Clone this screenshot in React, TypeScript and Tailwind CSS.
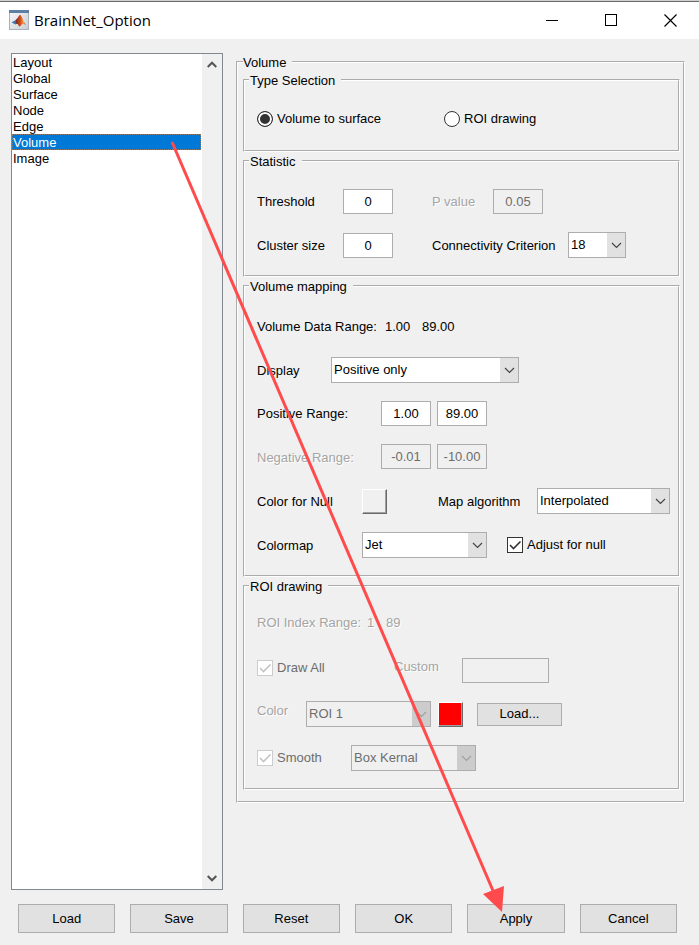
import React, { useState } from 'react';
import clsx from 'clsx';

const pages = ['Layout', 'Global', 'Surface', 'Node', 'Edge', 'Volume', 'Image'];
const actions = ['Load', 'Save', 'Reset', 'OK', 'Apply', 'Cancel'];

function MatlabIcon() {
  return (
    <svg width="20" height="20" viewBox="0 0 20 20" aria-hidden="true">
      <defs>
        <linearGradient id="frame" x1="0" y1="0" x2="1" y2="1">
          <stop offset="0" stopColor="#f8f9fa" />
          <stop offset="1" stopColor="#c9cdd2" />
        </linearGradient>
        <linearGradient id="peak" x1="0" y1="0" x2="1" y2="0">
          <stop offset="0" stopColor="#7a2418" />
          <stop offset="0.5" stopColor="#d9541e" />
          <stop offset="0.75" stopColor="#f3a33a" />
          <stop offset="1" stopColor="#b8331a" />
        </linearGradient>
      </defs>
      <rect x="0.5" y="0.5" width="19" height="19" fill="url(#frame)" stroke="#a9b1ba" />
      <rect x="0" y="0" width="20" height="3" fill="#5d7fa3" />
      <path d="M2.5 12.2 L6.6 10.2 L9.2 7.4 L8.6 13.4 L6.2 14.6 Z" fill="#3f78ae" />
      <path d="M6.6 10.2 C8.4 9.8 9.4 5.8 11 4.8 C12.8 5.6 14.4 12.2 17 15 C14.6 13.6 13.2 13.4 11.6 15.8 C10.8 17 9.8 16.6 9 14.2 L7 13.4 Z" fill="url(#peak)" />
    </svg>
  );
}

function Chevron({ className }: { className?: string }) {
  return (
    <svg width="11" height="7" viewBox="0 0 11 7" fill="none" stroke="currentColor" className={className} aria-hidden="true">
      <path d="M1 1 L5.5 5.5 L10 1" strokeWidth="1.2" />
    </svg>
  );
}

function Group({ title, className, children }: { title: string; className?: string; children: React.ReactNode }) {
  return (
    <fieldset className="min-w-0 border-2 border-white [border-style:groove]">
      <legend className="ml-1 h-4 pl-px pr-1.5 leading-[18px]">{title}</legend>
      <div className={clsx('flex flex-col pl-3 pr-2', className)}>{children}</div>
    </fieldset>
  );
}

interface FieldProps {
  label: string;
  value: string;
  disabled?: boolean;
  className?: string;
}

function Field({ label, value, disabled, className }: FieldProps) {
  return (
    <input
      type="text"
      aria-label={label}
      defaultValue={value}
      disabled={disabled}
      className={clsx(
        'h-[25px] shrink-0 border border-[#adadad] bg-white text-center disabled:bg-[#f0f0f0] disabled:text-[#6d6d6d]',
        className ?? 'w-[50px]'
      )}
    />
  );
}

function Popup({ label, value, disabled, className }: FieldProps) {
  return (
    <div className={clsx('relative h-[26px] shrink-0', className)}>
      <select
        aria-label={label}
        disabled={disabled}
        className="h-full w-full appearance-none border border-[#adadad] bg-white pl-0.5 pr-5 disabled:bg-[#f0f0f0] disabled:text-[#6d6d6d] disabled:opacity-100"
      >
        <option>{value}</option>
      </select>
      <span
        className={clsx(
          'pointer-events-none absolute inset-y-px right-px flex w-[18px] items-center justify-center',
          disabled ? 'bg-[#cccccc] text-[#a0a0a0]' : 'bg-[#e1e1e1] text-[#444444]'
        )}
      >
        <Chevron />
      </span>
    </div>
  );
}

function Label({ children, muted, className }: { children: React.ReactNode; muted?: boolean; className?: string }) {
  return (
    <span
      className={clsx(
        'shrink-0 whitespace-nowrap pt-px leading-[18px]',
        muted && 'text-[#a5a5a5] [text-shadow:1px_1px_0_#ffffff]',
        className
      )}
    >
      {children}
    </span>
  );
}

function Check({ label, disabled }: { label: string; disabled?: boolean }) {
  return (
    <label className={clsx('flex shrink-0 items-center gap-1 leading-4', disabled && 'text-[#6d6d6d]')}>
      <span className="relative h-4 w-4">
        <input
          type="checkbox"
          defaultChecked
          disabled={disabled}
          className="peer block h-4 w-4 appearance-none border border-[#333333] bg-white disabled:border-[#cccccc]"
        />
        <svg
          viewBox="0 0 16 16"
          fill="none"
          stroke="currentColor"
          strokeWidth="1.6"
          className={clsx('pointer-events-none absolute inset-0 hidden peer-checked:block', disabled ? 'text-[#c4c4c4]' : 'text-[#333333]')}
        >
          <path d="M3 8 L6.5 11.5 L13.5 4.5" />
        </svg>
      </span>
      {label}
    </label>
  );
}

function Radio({ label, checked, onChange }: { label: string; checked: boolean; onChange: () => void }) {
  return (
    <label className="flex items-center gap-1 whitespace-nowrap leading-4">
      <input
        type="radio"
        name="volume-type"
        checked={checked}
        onChange={onChange}
        className="h-4 w-4 appearance-none rounded-full border border-[#333333] bg-white checked:bg-[#333333] checked:shadow-[inset_0_0_0_2px_#ffffff]"
      />
      {label}
    </label>
  );
}

function Swatch({ label, className }: { label: string; className?: string }) {
  return (
    <button
      aria-label={label}
      className={clsx(
        'h-[25px] w-[25px] shrink-0 border border-b-[#696969] border-l-white border-r-[#696969] border-t-white shadow-[inset_-1px_-1px_0_#a0a0a0]',
        className
      )}
    />
  );
}

export default function App() {
  const [page, setPage] = useState('Volume');
  const [type, setType] = useState('surface');

  return (
    <div className="relative flex min-h-screen flex-col bg-[#f0f0f0] font-['Liberation_Sans',Arial,sans-serif] text-[13px] text-black">
      <header className="flex h-[39px] items-center border-t border-[#d0d0d0] bg-white pl-[9px] pr-[22px] shadow-[inset_0_1px_0_#6b6b6b]">
        <MatlabIcon />
        <h1 className="ml-[5px] flex-1 font-['Open_Sans','Noto_Sans',sans-serif] text-[15px] leading-5">BrainNet_Option</h1>
        <div className="flex gap-[46px]">
          <button aria-label="Minimize">
            <svg width="13" height="13" stroke="black" fill="none" shapeRendering="crispEdges"><path d="M0 6.5 H12" /></svg>
          </button>
          <button aria-label="Maximize">
            <svg width="13" height="13" stroke="black" fill="none" shapeRendering="crispEdges"><rect x="0.5" y="0.5" width="11" height="11" /></svg>
          </button>
          <button aria-label="Close">
            <svg width="13" height="13" stroke="black" fill="none" strokeWidth="1.2"><path d="M0.5 0.5 L12.5 12.5 M12.5 0.5 L0.5 12.5" /></svg>
          </button>
        </div>
      </header>

      <main className="flex flex-1 gap-[13px] pl-[11px] pr-3.5 pt-3.5">
        <div className="flex w-[212px] shrink-0 border border-[#828790] bg-white">
          <ul role="listbox" aria-label="Pages" className="flex-1">
            {pages.map((name) => (
              <li
                key={name}
                role="option"
                aria-selected={name === page}
                onClick={() => setPage(name)}
                className={clsx(
                  'mr-px h-4 cursor-default pl-px leading-[18px]',
                  name === page && 'bg-[#0078d7] text-white outline-1 -outline-offset-1 outline-dotted outline-[#8a7a6a]'
                )}
              >
                {name}
              </li>
            ))}
          </ul>
          <div className="flex w-5 flex-col items-center justify-between bg-[#f0f0f0] py-[7px] text-[#555555]">
            <button aria-label="Scroll up">
              <svg width="10" height="7" viewBox="0 0 10 7" fill="none" stroke="currentColor" strokeWidth="2"><path d="M0.7 6 L5 1.7 L9.3 6" /></svg>
            </button>
            <button aria-label="Scroll down">
              <svg width="10" height="7" viewBox="0 0 10 7" fill="none" stroke="currentColor" strokeWidth="2"><path d="M0.7 1 L5 5.3 L9.3 1" /></svg>
            </button>
          </div>
        </div>

        <div className="min-w-0 flex-1 pt-px">
          <fieldset className="min-w-0 border-2 border-white pb-[11px] pl-[5px] pr-[3px] [border-style:groove]">
            <legend className="h-4 pr-1.5 leading-[18px]">Volume</legend>
            <div className="flex flex-col gap-px pt-0.5">
              <Group title="Type Selection" className="py-[23px]">
                <div className="flex gap-[63px]">
                  <Radio label="Volume to surface" checked={type === 'surface'} onChange={() => setType('surface')} />
                  <Radio label="ROI drawing" checked={type === 'roi'} onChange={() => setType('roi')} />
                </div>
              </Group>

              <Group title="Statistic" className="gap-[18px] pb-[17px] pt-[19px]">
                <div className="flex h-[26px] items-center">
                  <Label className="w-[86px]">Threshold</Label>
                  <Field label="Threshold" value="0" />
                  <Label muted className="ml-[39px] w-[61px]">P value</Label>
                  <Field label="P value" value="0.05" disabled />
                </div>
                <div className="flex h-[26px] items-center">
                  <Label className="w-[86px]">Cluster size</Label>
                  <Field label="Cluster size" value="0" />
                  <Label className="ml-[39px] w-[136px]">Connectivity Criterion</Label>
                  <Popup label="Connectivity Criterion" value="18" className="w-[58px]" />
                </div>
              </Group>

              <Group title="Volume mapping" className="gap-[18px] pb-[17px] pt-[19px]">
                <div className="flex h-[26px] items-center">
                  <Label className="w-[128px]">Volume Data Range:</Label>
                  <Label className="w-[37px]">1.00</Label>
                  <Label>89.00</Label>
                </div>
                <div className="flex h-[26px] items-center">
                  <Label className="w-[74px]">Display</Label>
                  <Popup label="Display" value="Positive only" className="w-[188px]" />
                </div>
                <div className="flex h-[25px] items-center gap-1.5">
                  <Label className="w-[118px]">Positive Range:</Label>
                  <Field label="Positive range minimum" value="1.00" />
                  <Field label="Positive range maximum" value="89.00" />
                </div>
                <div className="flex h-[26px] items-start gap-1.5">
                  <Label muted className="w-[118px] self-center">Negative Range:</Label>
                  <Field label="Negative range minimum" value="-0.01" disabled />
                  <Field label="Negative range maximum" value="-10.00" disabled />
                </div>
                <div className="flex h-[26px] items-center">
                  <Label className="w-[105px]">Color for Null</Label>
                  <Swatch label="Color for null" className="bg-[#f0f0f0]" />
                  <Label className="ml-[51px] w-[99px]">Map algorithm</Label>
                  <Popup label="Map algorithm" value="Interpolated" className="w-[133px]" />
                </div>
                <div className="flex h-[26px] items-center">
                  <Label className="w-[105px]">Colormap</Label>
                  <Popup label="Colormap" value="Jet" className="mr-5 w-[125px]" />
                  <Check label="Adjust for null" />
                </div>
              </Group>

              <Group title="ROI drawing" className="gap-[18px] pb-[17px] pt-[15px]">
                <div className="mb-1 flex h-[26px] items-center">
                  <Label muted className="w-[110px]">ROI Index Range:</Label>
                  <Label muted className="w-[19px]">1</Label>
                  <Label muted>89</Label>
                </div>
                <div className="flex h-[26px] items-center">
                  <div className="w-[137px] self-start pt-[3px]">
                    <Check label="Draw All" disabled />
                  </div>
                  <Label muted className="w-[68px] self-start">Custom</Label>
                  <Field label="Custom" value="" disabled className="w-[87px]" />
                </div>
                <div className="flex h-[26px] items-center">
                  <Label muted className="w-[49px] self-start">Color</Label>
                  <Popup label="ROI" value="ROI 1" disabled className="w-[125px]" />
                  <Swatch label="ROI color" className="ml-[7px] bg-[#ff0000]" />
                  <button className="ml-3.5 h-[23px] w-[85px] border border-[#adadad] bg-[#e1e1e1] leading-4">Load...</button>
                </div>
                <div className="flex h-[26px] items-center">
                  <div className="w-[94px]">
                    <Check label="Smooth" disabled />
                  </div>
                  <Popup label="Smoothing kernel" value="Box Kernal" disabled className="w-[125px]" />
                </div>
              </Group>
            </div>
          </fieldset>
        </div>
      </main>

      <footer className="grid grid-cols-6 gap-[15px] pb-3 pl-[18px] pr-[22px] pt-3.5">
        {actions.map((name) => (
          <button key={name} className="h-[29px] border border-[#adadad] bg-[#e1e1e1] leading-4">
            {name}
          </button>
        ))}
      </footer>

      {/* pointer from the selected page to the Apply button */}
      <svg className="pointer-events-none absolute left-0 top-0" width="699" height="945" viewBox="0 0 699 945" aria-hidden="true">
        <path d="M172 142 L494 893" stroke="#ff4b4b" strokeWidth="3" />
        <path d="M483 894 L504 886 L502 912 Z" fill="#ff4b4b" />
      </svg>
    </div>
  );
}
